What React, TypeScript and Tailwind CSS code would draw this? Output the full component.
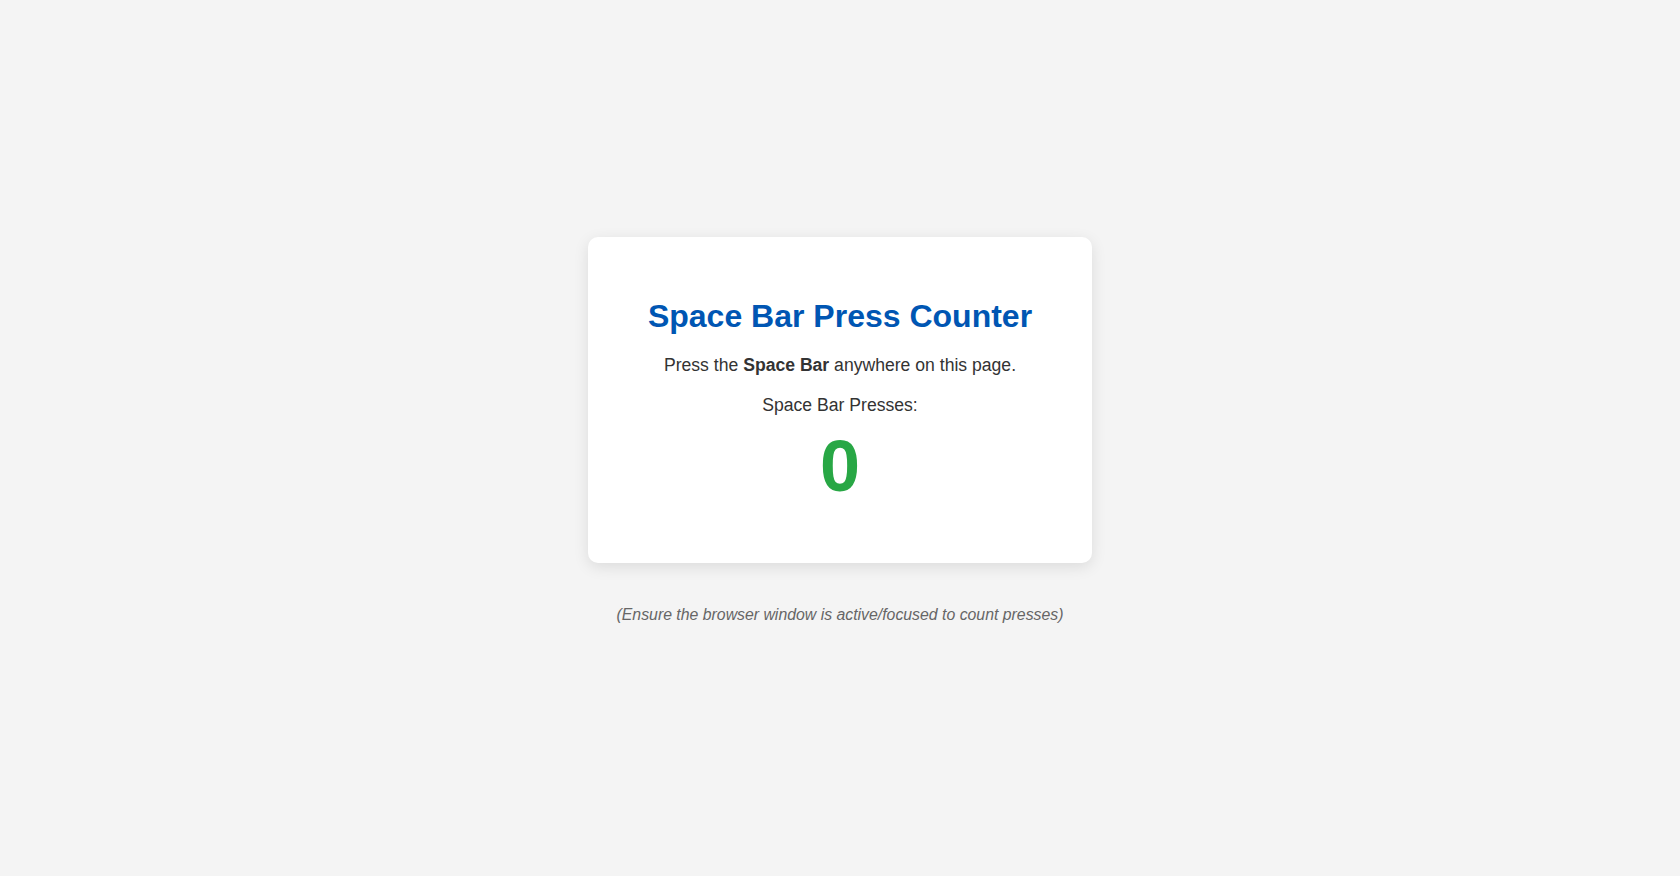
import { useEffect, useState } from "react";

export default function App() {
  const [count, setCount] = useState(0);

  useEffect(() => {
    const onKey = (e: KeyboardEvent) => {
      if (e.code === "Space" || e.key === " ") {
        e.preventDefault();
        setCount((c) => c + 1);
      }
    };
    window.addEventListener("keydown", onKey);
    return () => window.removeEventListener("keydown", onKey);
  }, []);

  return (
    <div className="min-h-screen bg-[#f4f4f4] flex flex-col items-center pt-[237px] font-['Liberation_Sans',Arial,sans-serif] leading-[normal] text-[#333]">
      <div className="w-[504px] bg-white rounded-[10px] shadow-[0_4px_15px_rgba(0,0,0,0.1)] pt-[61px] pb-[56px] text-center">
        <h1 className="text-[32px] font-bold text-[#0056b3] mb-[20px]">Space Bar Press Counter</h1>
        <p className="text-[17.6px] mb-[19px]">
          Press the <strong className="font-bold">Space Bar</strong> anywhere on this page.
        </p>
        <p className="text-[17.6px] mb-[9px]">Space Bar Presses:</p>
        <div className="text-[72px] font-bold text-[#28a745]">{count}</div>
      </div>
      <p className="mt-[43px] text-[15.84px] italic text-[#666]">
        (Ensure the browser window is active/focused to count presses)
      </p>
    </div>
  );
}
